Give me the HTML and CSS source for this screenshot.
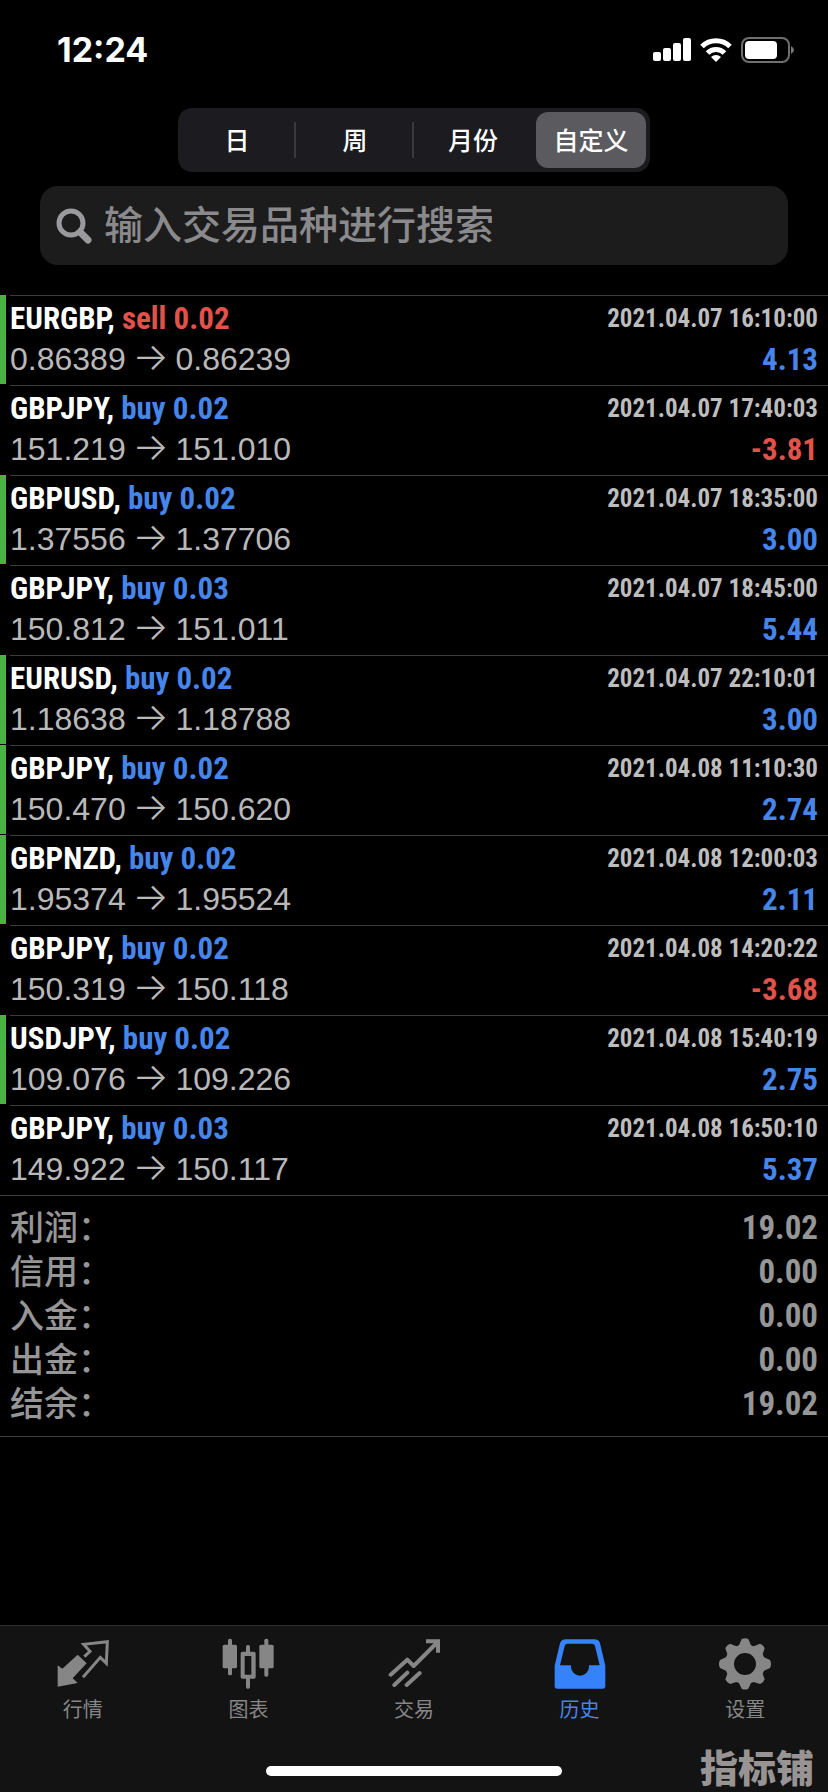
FILE: index.html
```html
<!DOCTYPE html>
<html lang="zh-CN">
<head>
<meta charset="utf-8">
<meta name="viewport" content="width=device-width, initial-scale=1">
<title>历史</title>
<link rel="stylesheet" href="styles.css">
</head>
<body>
<div class="app">
  <header class="status">
    <time class="clock">12:24</time>
    <div class="status-icons">
      <svg width="38" height="24" viewBox="0 0 38 24" fill="#fff" aria-hidden="true"><rect x="0" y="14" width="8" height="9" rx="2"/><rect x="10" y="10" width="8" height="13" rx="2"/><rect x="20" y="5" width="8" height="18" rx="2"/><rect x="30" y="0" width="8" height="23" rx="2"/></svg>
      <svg width="32" height="24" viewBox="0 0 32 24" aria-hidden="true"><g fill="none" stroke="#fff" stroke-width="5"><path d="M2 8.500A20 20 0 0 1 30 8.500"/><path d="M7.500 15A12 12 0 0 1 24.500 15"/></g><path fill="#fff" d="M11 19a7.500 7.500 0 0 1 10 0L16 24z"/></svg>
      <svg width="54" height="26" viewBox="0 0 54 26" aria-hidden="true"><rect x="1" y="1" width="47" height="24" rx="7" fill="none" stroke="#6f6f6f" stroke-width="2"/><rect x="4" y="4" width="32" height="18" rx="4" fill="#fff"/><path fill="#777" d="M50 9q6 4 0 8z"/></svg>
    </div>
  </header>

  <nav class="segments" aria-label="时间范围">
    <button type="button">日</button>
    <button type="button">周</button>
    <button type="button">月份</button>
    <button type="button" class="selected" aria-pressed="true">自定义</button>
  </nav>

  <label class="search">
    <svg width="36" height="36" viewBox="0 0 36 36" fill="none" stroke="#9a9a9c" aria-hidden="true"><circle cx="15" cy="15" r="12" stroke-width="5"/><path d="M24 24l8 8" stroke-width="7" stroke-linecap="round"/></svg>
    <input type="search" placeholder="输入交易品种进行搜索" aria-label="输入交易品种进行搜索">
  </label>

  <main>
    <ul class="deals">
      <li class="deal closed"><h2>EURGBP, <span class="loss">sell 0.02</span></h2><time>2021.04.07 16:10:00</time><p>0.86389 <span class="arrow">→</span> 0.86239</p><strong class="gain">4.13</strong></li>
      <li class="deal"><h2>GBPJPY, <span class="gain">buy 0.02</span></h2><time>2021.04.07 17:40:03</time><p>151.219 <span class="arrow">→</span> 151.010</p><strong class="loss">-3.81</strong></li>
      <li class="deal closed"><h2>GBPUSD, <span class="gain">buy 0.02</span></h2><time>2021.04.07 18:35:00</time><p>1.37556 <span class="arrow">→</span> 1.37706</p><strong class="gain">3.00</strong></li>
      <li class="deal"><h2>GBPJPY, <span class="gain">buy 0.03</span></h2><time>2021.04.07 18:45:00</time><p>150.812 <span class="arrow">→</span> 151.011</p><strong class="gain">5.44</strong></li>
      <li class="deal closed"><h2>EURUSD, <span class="gain">buy 0.02</span></h2><time>2021.04.07 22:10:01</time><p>1.18638 <span class="arrow">→</span> 1.18788</p><strong class="gain">3.00</strong></li>
      <li class="deal closed"><h2>GBPJPY, <span class="gain">buy 0.02</span></h2><time>2021.04.08 11:10:30</time><p>150.470 <span class="arrow">→</span> 150.620</p><strong class="gain">2.74</strong></li>
      <li class="deal closed"><h2>GBPNZD, <span class="gain">buy 0.02</span></h2><time>2021.04.08 12:00:03</time><p>1.95374 <span class="arrow">→</span> 1.95524</p><strong class="gain">2.11</strong></li>
      <li class="deal"><h2>GBPJPY, <span class="gain">buy 0.02</span></h2><time>2021.04.08 14:20:22</time><p>150.319 <span class="arrow">→</span> 150.118</p><strong class="loss">-3.68</strong></li>
      <li class="deal closed"><h2>USDJPY, <span class="gain">buy 0.02</span></h2><time>2021.04.08 15:40:19</time><p>109.076 <span class="arrow">→</span> 109.226</p><strong class="gain">2.75</strong></li>
      <li class="deal"><h2>GBPJPY, <span class="gain">buy 0.03</span></h2><time>2021.04.08 16:50:10</time><p>149.922 <span class="arrow">→</span> 150.117</p><strong class="gain">5.37</strong></li>
    </ul>
    <dl class="totals">
      <div><dt>利润：</dt><dd>19.02</dd></div>
      <div><dt>信用：</dt><dd>0.00</dd></div>
      <div><dt>入金：</dt><dd>0.00</dd></div>
      <div><dt>出金：</dt><dd>0.00</dd></div>
      <div><dt>结余：</dt><dd>19.02</dd></div>
    </dl>
  </main>

  <footer class="dock">
    <nav class="tabs" aria-label="主导航">
      <a href="#quotes"><svg viewBox="0 0 156 156" aria-hidden="true"><path fill="#868686" d="M2 82l14 10 46-42 27 26-42 45 15 14-60 11z"/><path fill="none" stroke="#868686" stroke-width="9" d="M82 56l17-16-19-21 71-8-3 65-18-18-52 60"/></svg>行情</a>
      <a href="#charts"><svg viewBox="0 0 156 156" fill="#868686" aria-hidden="true"><rect x="2" y="20" width="43" height="71" rx="5"/><rect x="18" y="2" width="12" height="110" rx="5"/><path fill-rule="evenodd" d="M61 41h35a5 5 0 0 1 5 5v71a5 5 0 0 1-5 5H61a5 5 0 0 1-5-5V46a5 5 0 0 1 5-5zM68 54v56h20V54z"/><rect x="72" y="21" width="12" height="24" rx="5"/><rect x="72" y="118" width="12" height="34" rx="5"/><rect x="112" y="20" width="43" height="71" rx="5"/><rect x="127" y="2" width="12" height="114" rx="5"/></svg>图表</a>
      <a href="#trade"><svg viewBox="0 0 156 156" fill="none" stroke="#868686" stroke-width="12" stroke-linecap="round" stroke-linejoin="round" aria-hidden="true"><path d="M8 110l50-45 19 19 69-69M19 141l39-37M56 141l39-36"/><path stroke-linecap="butt" stroke-linejoin="miter" d="M114 10h36v34"/></svg>交易</a>
      <a href="#history" class="active" aria-current="page"><svg viewBox="0 0 156 156" aria-hidden="true"><path fill="#3582fa" fill-rule="evenodd" d="M36 4h84q15 0 18 12l16 67v61q0 8-8 8H10q-8 0-8-8V83l16-67Q22 4 36 4zM41 17q-7 0-9 7L18 82h33v4a27 27 0 0 0 54 0v-4h32L123 24q-2-7-9-7z"/></svg>历史</a>
      <a href="#settings"><svg viewBox="0 0 156 156" aria-hidden="true"><path fill="#868686" fill-rule="evenodd" d="M68 3q10-4 20 0l8 19 8 3 19-8q10 4 14 14l-6 18 4 9 18 8q6 12 0 24l-18 8-4 9 6 17q-4 10-14 14l-19-6-8 3-8 17q-10 5-20 0l-8-17-8-3-19 6q-10-4-14-14l6-17-4-9-18-8q-6-12 0-24l18-8 4-9-6-18q4-10 14-14l19 8 8-3zM78 45a33 33 0 1 0 0 66 33 33 0 0 0 0-66z"/></svg>设置</a>
    </nav>
    <div class="home-bar"></div>
    <div class="watermark">指标铺</div>
  </footer>
</div>
</body>
</html>
```
FILE: styles.css
```css
* { box-sizing: border-box; margin: 0; padding: 0; }

body {
  background: #000;
  color: #fff;
  font-family: "Liberation Sans", "Noto Sans CJK SC", sans-serif;
}

.app { display: flex; flex-direction: column; min-height: 100vh; }

.status {
  display: flex;
  justify-content: space-between;
  align-items: center;
  height: 99px;
  padding: 0 33px 0 57px;
}
.clock { font: 700 34px Inter, sans-serif; }
.status-icons { display: flex; align-items: center; gap: 9px; }

.segments {
  display: grid;
  grid-template-columns: repeat(4, 1fr);
  align-self: center;
  width: 57%;
  height: 64px;
  margin-top: 9px;
  background: #1c1c20;
  border-radius: 14px;
}
.segments button {
  position: relative;
  padding-bottom: 3px;
  border: 0;
  background: none;
  color: #fff;
  font: 500 25px "Liberation Sans", "Noto Sans CJK SC", sans-serif;
}
.segments button:nth-child(-n+2)::after {
  content: "";
  position: absolute;
  right: 0;
  top: 14px;
  bottom: 14px;
  width: 2px;
  background: #3a3a3e;
}
.segments .selected { margin: 4px; background: #5b5a5f; border-radius: 12px; white-space: nowrap; }

.search {
  display: flex;
  align-items: center;
  gap: 12px;
  height: 79px;
  margin: 14px 40px 30px;
  padding: 0 16px;
  background: #1c1c1d;
  border-radius: 18px;
}
.search input {
  flex: 1;
  min-width: 0;
  border: 0;
  outline: 0;
  background: none;
  color: #fff;
  font: 500 39px/56px "Liberation Sans", "Noto Sans CJK SC", sans-serif;
}
.search input::placeholder { color: #8a8a8c; opacity: 1; }

.deals { list-style: none; }
.deal {
  position: relative;
  display: grid;
  grid-template-columns: 1fr auto;
  grid-template-rows: 41px 41px;
  height: 90px;
  padding: 3px 10px 0;
  line-height: 41px;
}
.deal::before {
  content: "";
  position: absolute;
  left: 10px;
  right: 0;
  top: 0;
  height: 1px;
  background: #3c3c3c;
}
.closed::after {
  content: "";
  position: absolute;
  left: 0;
  top: 0;
  width: 6px;
  height: 89px;
  background: #4bb343;
}
.deal h2, .deal time, .deal strong, .totals dd {
  font-family: "Roboto Condensed", "Liberation Sans", sans-serif;
  font-weight: 700;
}
.deal h2, .deal strong { font-size: 31px; }
.deal time { color: #bdbdbd; font-size: 25px; text-align: right; }
.deal p { color: #b9b9b9; font-size: 32px; }
.deal strong { text-align: right; }
.deal .gain { color: #4685ea; }
.deal .loss { color: #e1524a; }
.arrow {
  display: inline-flex;
  justify-content: center;
  width: 32px;
  font-family: Inter, sans-serif;
  font-size: 38px;
  font-weight: 300;
  line-height: 32px;
}

.totals {
  padding: 10px;
  border-top: 1px solid #3c3c3c;
  border-bottom: 1px solid #3c3c3c;
  color: #969696;
  font-size: 34px;
  line-height: 44px;
}
.totals div { display: flex; justify-content: space-between; height: 44px; }
.totals dt { font-weight: 500; }
.totals dd { font-size: 33px; }

.dock {
  position: relative;
  margin-top: auto;
  height: 167px;
  padding-top: 12px;
  background: #131313;
  border-top: 1px solid #303030;
}
.tabs { display: grid; grid-template-columns: repeat(5, 1fr); }
.tabs a {
  display: flex;
  flex-direction: column;
  align-items: center;
  gap: 5px;
  color: #868686;
  font: 400 20px/30px "Liberation Sans", "Noto Sans CJK SC", sans-serif;
  text-decoration: none;
}
.tabs svg { width: 52px; height: 52px; }
.tabs .active { color: #4685ea; }
.home-bar {
  width: 296px;
  height: 10px;
  margin: 41px auto 0;
  background: #fff;
  border-radius: 5px;
}
.watermark {
  position: absolute;
  right: 14px;
  bottom: 4px;
  color: #989494;
  font: 900 38px/44px "Noto Sans CJK SC", sans-serif;
}
```
